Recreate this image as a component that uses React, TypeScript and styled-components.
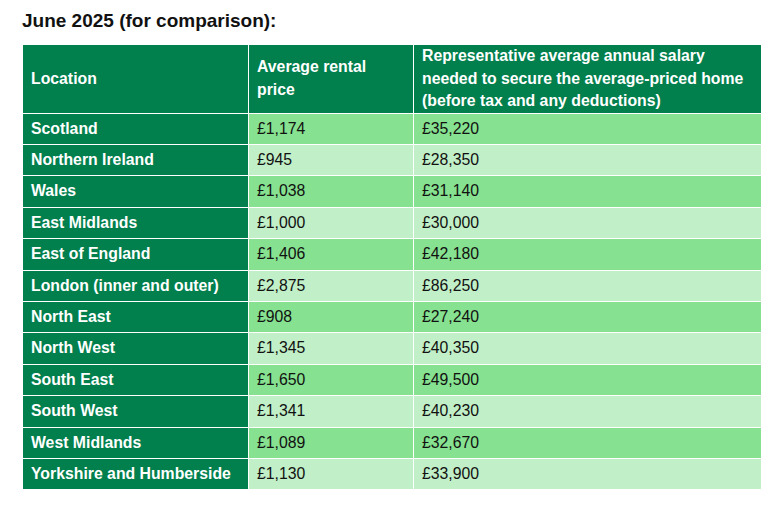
import styled, { createGlobalStyle } from "styled-components"

const GlobalStyle = createGlobalStyle`
  body {
    margin: 0;
    background: #ffffff;
    font-family: "Liberation Sans", Arial, sans-serif;
    color: #111111;
  }
`

const Page = styled.div`
  padding: 9px 23px 0 22px;
`

const Title = styled.h2`
  margin: 0 0 13px 0;
  font-size: 19px;
  line-height: 23px;
  font-weight: bold;
  color: #111111;
`

const Table = styled.table`
  border-collapse: collapse;
  table-layout: fixed;
  width: 739px;
  font-size: 15.8px;
  line-height: 22.4px;
`

const HeadCell = styled.th<{ $width: number }>`
  box-sizing: border-box;
  width: ${p => p.$width}px;
  height: 68px;
  background: #017f4d;
  color: #ffffff;
  font-weight: bold;
  text-align: left;
  vertical-align: middle;
  padding: 0 8px;
  border: 1px solid #ffffff;
  border-top: 0;
`

const NameCell = styled.td`
  background: #017f4d;
  color: #ffffff;
  font-weight: bold;
  padding: 4px 8px;
  border: 1px solid #ffffff;
  white-space: nowrap;
`

const ValueCell = styled.td<{ $shade: boolean }>`
  background: ${p => (p.$shade ? "#86e290" : "#c1efc8")};
  color: #111111;
  padding: 4px 8px;
  border: 1px solid #ffffff;
`

const rows: [string, string, string][] = [
  ["Scotland", "£1,174", "£35,220"],
  ["Northern Ireland", "£945", "£28,350"],
  ["Wales", "£1,038", "£31,140"],
  ["East Midlands", "£1,000", "£30,000"],
  ["East of England", "£1,406", "£42,180"],
  ["London (inner and outer)", "£2,875", "£86,250"],
  ["North East", "£908", "£27,240"],
  ["North West", "£1,345", "£40,350"],
  ["South East", "£1,650", "£49,500"],
  ["South West", "£1,341", "£40,230"],
  ["West Midlands", "£1,089", "£32,670"],
  ["Yorkshire and Humberside", "£1,130", "£33,900"],
]

const App = () => {
  return (
    <Page>
      <GlobalStyle />
      <Title>June 2025 (for comparison):</Title>
      <Table>
        <thead>
          <tr>
            <HeadCell $width={226}>Location</HeadCell>
            <HeadCell $width={165}>Average rental price</HeadCell>
            <HeadCell $width={348}>
              Representative average annual salary needed to secure the average-priced home (before tax and any deductions)
            </HeadCell>
          </tr>
        </thead>
        <tbody>
          {rows.map(([place, rent, salary], i) => (
            <tr key={place}>
              <NameCell>{place}</NameCell>
              <ValueCell $shade={i % 2 === 0}>{rent}</ValueCell>
              <ValueCell $shade={i % 2 === 0}>{salary}</ValueCell>
            </tr>
          ))}
        </tbody>
      </Table>
    </Page>
  )
}

export default App
